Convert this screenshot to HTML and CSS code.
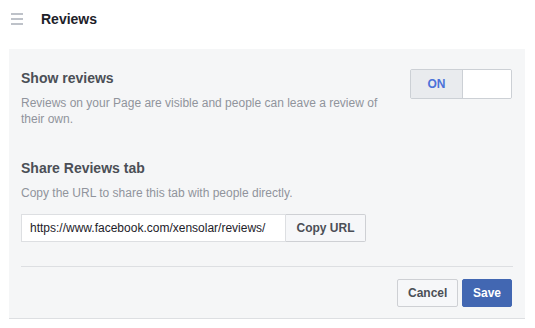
FILE: index.html
```html
<!DOCTYPE html>
<html lang="en">
<head>
    <meta charset="UTF-8">
    <meta name="viewport" content="width=device-width, initial-scale=1.0">
    <title>Reviews</title>
    <link rel="stylesheet" href="styles.css">
</head>
<body>
    <div class="header">
        <svg class="menu-icon" width="12" height="12" viewBox="0 0 12 12" aria-hidden="true">
            <rect x="0" y="0" width="12" height="2" fill="#bec2c9"/>
            <rect x="0" y="5" width="12" height="2" fill="#bec2c9"/>
            <rect x="0" y="10" width="12" height="2" fill="#bec2c9"/>
        </svg>
        <h1 class="header-title">Reviews</h1>
    </div>
    <div class="panel">
        <div class="setting-row">
            <div class="setting-text">
                <h2 class="setting-title">Show reviews</h2>
                <p class="setting-desc">Reviews on your Page are visible and people can leave a review of their own.</p>
            </div>
            <div class="toggle">
                <span class="toggle-on">ON</span>
                <span class="toggle-off"></span>
            </div>
        </div>
        <div class="setting-block">
            <h2 class="setting-title">Share Reviews tab</h2>
            <p class="setting-desc">Copy the URL to share this tab with people directly.</p>
            <div class="url-row">
                <input type="text" class="url-input" value="https://www.facebook.com/xensolar/reviews/" readonly>
                <button class="btn">Copy URL</button>
            </div>
        </div>
        <div class="panel-footer">
            <button class="btn">Cancel</button>
            <button class="btn btn-primary">Save</button>
        </div>
    </div>
</body>
</html>
```

FILE: styles.css
```css
body {
    margin: 0;
    font-family: "Liberation Sans", Arial, sans-serif;
    background: #fff;
    color: #4b4f56;
}
.header {
    display: flex;
    align-items: center;
    height: 37px;
    padding-left: 11px;
    margin-bottom: 12px;
}
.menu-icon {
    display: block;
    margin-top: 1px;
}
.header-title {
    margin: 0 0 0 18px;
    font-size: 14px;
    font-weight: bold;
    color: #1d2129;
    line-height: 18px;
}
.panel {
    margin: 0 10px 0 9px;
    padding: 20px 12px 11px;
    background: #f5f6f7;
    border-bottom: 1px solid #dddfe2;
}
.setting-row {
    display: flex;
    justify-content: space-between;
    align-items: flex-start;
}
.setting-text {
    flex: 1;
    margin-right: 24px;
}
.setting-title {
    margin: 0;
    font-size: 14px;
    line-height: 18px;
    font-weight: bold;
    color: #4b4f56;
}
.setting-desc {
    margin: 8px 0 0;
    font-size: 12px;
    line-height: 16px;
    color: #90949c;
}
.toggle {
    display: flex;
    width: 100px;
    height: 28px;
    margin-right: 1px;
    border: 1px solid #ccd0d5;
    border-radius: 2px;
    overflow: hidden;
}
.toggle-on {
    width: 51px;
    background: #e9ebee;
    border-right: 1px solid #ccd0d5;
    color: #4b72d9;
    font-size: 12px;
    font-weight: bold;
    line-height: 28px;
    text-align: center;
}
.toggle-off {
    flex: 1;
    background: #fff;
}
.setting-block {
    margin-top: 32px;
}
.url-row {
    display: flex;
    margin-top: 13px;
}
.url-input {
    box-sizing: border-box;
    width: 265px;
    height: 28px;
    padding: 0 8px;
    border: 1px solid #dddfe2;
    border-radius: 0;
    background: #fff;
    font-family: inherit;
    font-size: 12px;
    color: #1d2129;
    outline: none;
}
.btn {
    box-sizing: border-box;
    height: 28px;
    padding: 0 10px;
    border: 1px solid #ced0d4;
    border-radius: 2px;
    background: #f6f7f9;
    color: #4b4f56;
    font-family: inherit;
    font-size: 12px;
    font-weight: bold;
    cursor: pointer;
}
.url-row .btn {
    width: 80px;
    border-radius: 0 2px 2px 0;
    border-left: none;
}
.panel-footer {
    display: flex;
    justify-content: flex-end;
    gap: 4px;
    margin-top: 24px;
    padding-top: 12px;
    padding-right: 1px;
    border-top: 1px solid #dddfe2;
}
.panel-footer .btn {
    width: 61px;
}
.panel-footer .btn-primary {
    width: 50px;
    background: #4267b2;
    border-color: #4267b2;
    color: #fff;
}
```
